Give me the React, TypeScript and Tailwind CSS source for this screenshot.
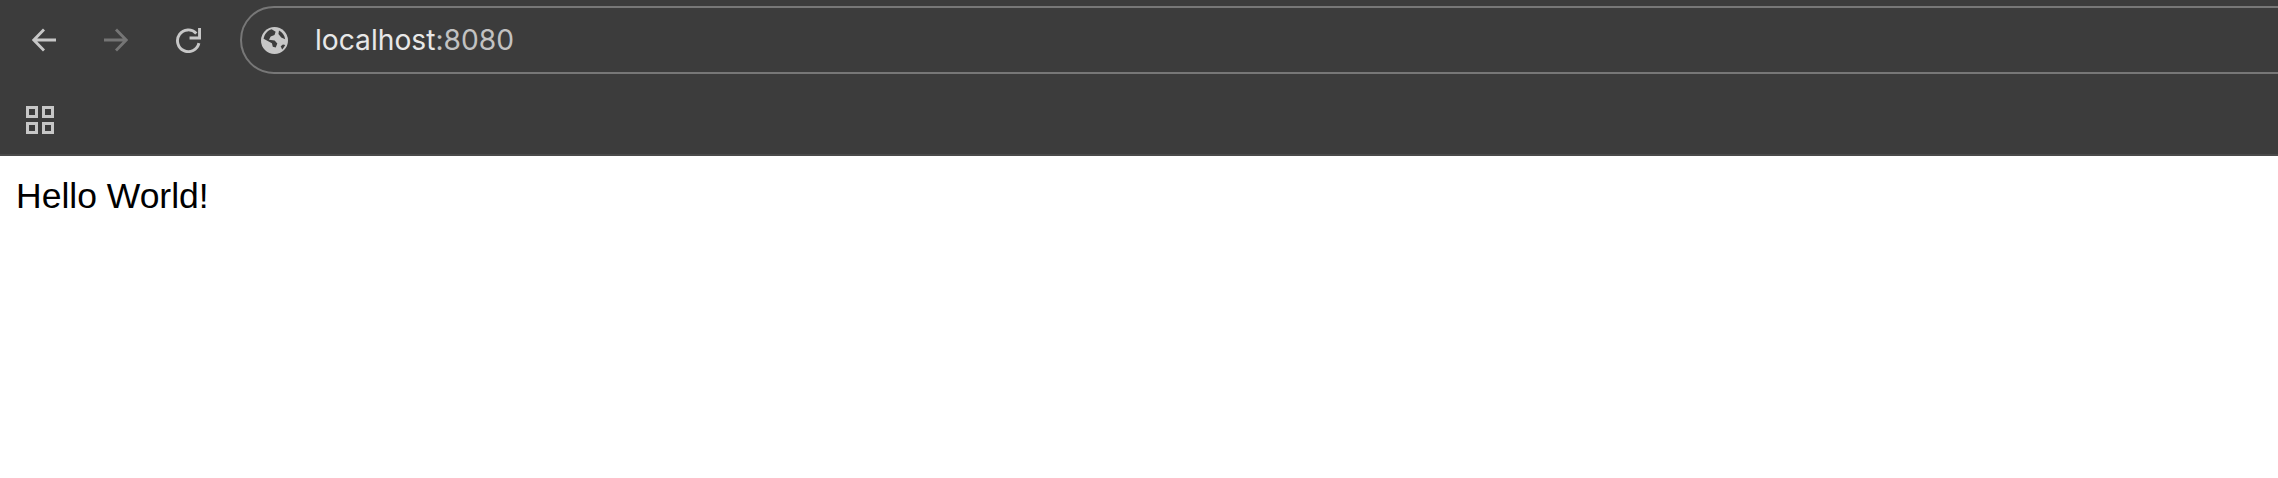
const ICON = 'stroke-[#c7c7c7]';

function BackIcon() {
  return (
    <svg className="w-6 h-6" viewBox="0 0 24 24" fill="none" strokeWidth={2.8}>
      <path className={ICON} d="M24 12H2M12 1.5 1.8 12 12 22.5" />
    </svg>
  );
}

function ForwardIcon() {
  return (
    <svg className="w-6 h-6" viewBox="0 0 24 24" fill="none" strokeWidth={2.8}>
      <path className="stroke-[#757575]" d="M0 12h22M12 1.5 22.2 12 12 22.5" />
    </svg>
  );
}

function ReloadIcon() {
  return (
    <svg className="w-[25px] h-[25px]" viewBox="0 0 24 24" fill="none">
      <path className={ICON} strokeWidth={2.8} d="M22 14.5A10.4 10.4 0 1 1 19.5 5.2" />
      <path className="fill-[#c7c7c7]" d="M24 0v11H13V8.2h8.2V0z" />
    </svg>
  );
}

function GlobeIcon() {
  return (
    <svg className="w-[27px] h-[27px]" viewBox="0 0 24 24">
      <circle cx="12" cy="12" r="12" className="fill-[#c7c7c7]" />
      <path className="fill-[#3c3c3c]" d="M9.5 1.9 13 4.2l-1 3-3.4 1.2-1.5 3 5 .7 2.4 2.6-1.4 3.6-2.6-.8-.8-3L2.3 10.4C3 6.3 5.8 3 9.5 1.9zM16 3.2c2.9 1.5 4.9 4.2 5.5 7.6l-3.5-1.4-2.5-3.2zM19.5 15.5l2 .6c-.6 1.5-1.5 2.8-2.7 3.8l-1.3-2.7z" />
    </svg>
  );
}

function BookmarksIcon() {
  return (
    <div className="grid grid-cols-2 gap-1 w-[28px] h-[28px]">
      <div className="border-[3px] border-[#c7c7c7]" />
      <div className="border-[3px] border-[#c7c7c7]" />
      <div className="border-[3px] border-[#c7c7c7]" />
      <div className="border-[3px] border-[#c7c7c7]" />
    </div>
  );
}

export default function App() {
  return (
    <div className="h-[478px] overflow-hidden bg-white">
      <header className="h-[156px] bg-[#3c3c3c] border-b-2 border-[#4a4a4a]">
        <div className="flex items-center pt-[6px] pl-[32px] h-[74px]">
          <div className="flex items-center gap-[48px]">
            <BackIcon />
            <ForwardIcon />
            <ReloadIcon />
          </div>
          <div className="flex items-center grow h-[68px] ml-[39px] -mr-10 pl-[19px] gap-[27px] rounded-l-[34px] border-2 border-[#777777]">
            <GlobeIcon />
            <span className="font-['Inter',sans-serif] text-[28.2px] text-[#e8e8e8]">
              localhost<span className="text-[#c2c2c2]">:8080</span>
            </span>
          </div>
        </div>
        <div className="pt-[32px] pl-[26px]">
          <BookmarksIcon />
        </div>
      </header>
      <p className="pt-[18px] pl-[16px] font-['Liberation_Sans',Arial,sans-serif] text-[35.5px] leading-[44px] text-black">
        Hello World!
      </p>
    </div>
  );
}
